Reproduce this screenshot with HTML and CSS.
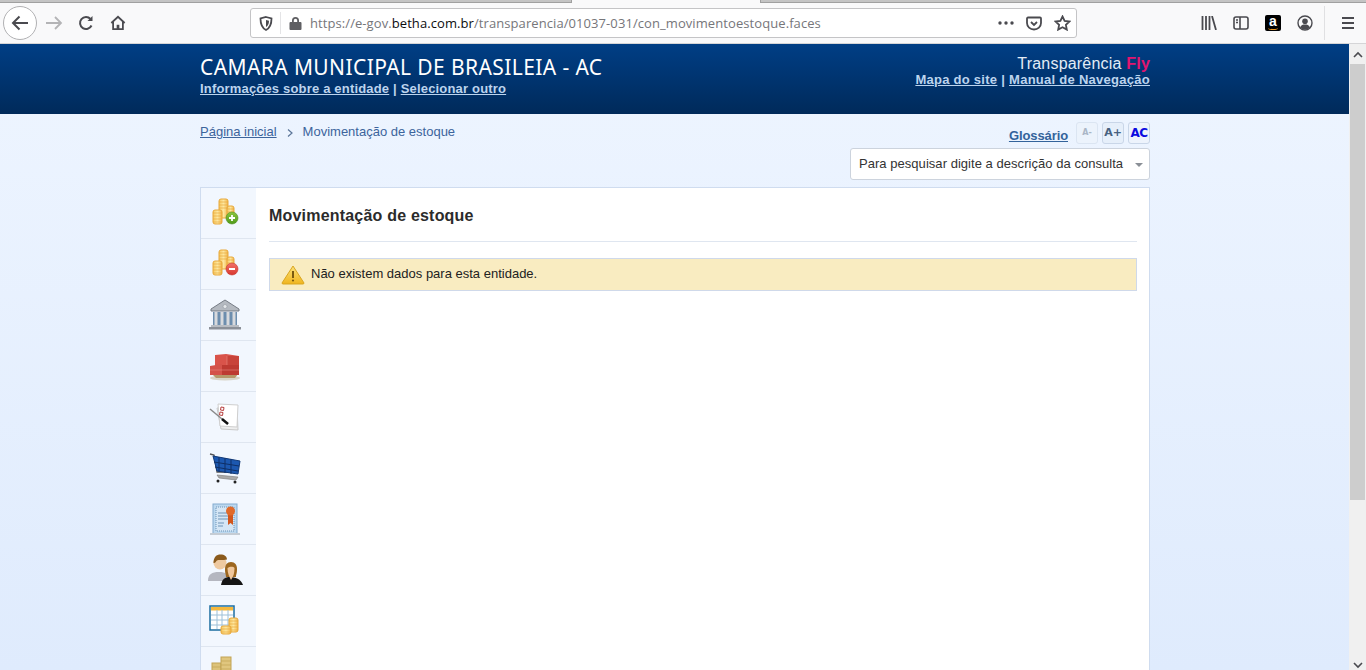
FILE: index.html
```html
<!DOCTYPE html>
<html lang="pt-BR">

<head>
    <meta charset="UTF-8">
    <title>Movimentação de estoque</title>
    <link rel="stylesheet" href="styles.css">
</head>

<body>
    <div class="tabstrip">
        <div class="tab-active"></div>
    </div>

    <!-- browser toolbar -->
    <div class="toolbar">
        <div class="nav-btns">
            <span class="back-btn">
                <svg width="20" height="20" viewBox="0 0 20 20" fill="none" stroke="#4a4a4f" stroke-width="2"><path d="M18 10H3M9.500 3.500L3 10l6.500 6.500"/></svg>
            </span>
            <svg class="fwd" width="18" height="18" viewBox="0 0 18 18" fill="none" stroke="#b4b4b6" stroke-width="1.800"><path d="M1 9h15M10 3l6 6-6 6"/></svg>
            <svg class="reload" width="16" height="16" viewBox="0 0 16 16" fill="none" stroke="#4a4a4f" stroke-width="2"><path d="M13.500 10.500A6 6 0 1 1 12.500 4"/><path d="M14.500 1v5h-5" fill="#4a4a4f" stroke="none"/></svg>
            <svg class="home" width="16" height="16" viewBox="0 0 18 18" fill="none" stroke="#4a4a4f" stroke-width="2"><path d="M1.500 9L9 2l7.500 7M3.500 8v8h11V8"/><rect x="7.500" y="11" width="3" height="5" fill="#4a4a4f" stroke="none"/></svg>
        </div>
        <div class="urlbar">
            <svg class="shield" width="14" height="15" viewBox="0 0 14 15" fill="none" stroke="#4a4a4f" stroke-width="1.800"><path d="M7 1l5.500 1.500c0 6-1.500 9.500-5.500 11.500C3 12 1.500 8.500 1.500 2.500z"/><path d="M7 4l3 .8C10 8 9 9.800 7 11z" fill="#4a4a4f" stroke="none"/></svg>
            <span class="url-sep"></span>
            <svg class="lock" width="13" height="14" viewBox="0 0 13 14"><path d="M3 6V4.500a3.500 3.500 0 0 1 7 0V6h1.500a1 1 0 0 1 1 1v6a1 1 0 0 1-1 1h-10a1 1 0 0 1-1-1V7a1 1 0 0 1 1-1zm1.800 0h3.400V4.500a1.700 1.700 0 0 0-3.400 0z" fill="#5f5f63"/></svg>
            <span class="url-text">https://e-gov.<b>betha.com.br</b>/transparencia/01037-031/con_movimentoestoque.faces</span>
            <span class="url-end">
                <svg width="16" height="4" viewBox="0 0 16 4" fill="#4a4a4f"><circle cx="2" cy="2" r="1.700"/><circle cx="8" cy="2" r="1.700"/><circle cx="14" cy="2" r="1.700"/></svg>
                <svg width="16" height="15" viewBox="0 0 16 15" fill="none" stroke="#4a4a4f" stroke-width="1.800"><path d="M2 1.500h12a1 1 0 0 1 1 1V7a7 6.500 0 0 1-14 0V2.500a1 1 0 0 1 1-1z"/><path d="M5 6l3 3 3-3"/></svg>
                <svg width="17" height="16" viewBox="0 0 17 16" fill="none" stroke="#4a4a4f" stroke-width="1.800"><path d="M8.500 1.500l2.100 4.400 4.900.6-3.600 3.300.9 4.800-4.300-2.400-4.300 2.400.9-4.800L1.500 6.500l4.900-.6z"/></svg>
            </span>
        </div>
        <div class="tools">
            <svg width="16" height="14" viewBox="0 0 16 14" fill="none" stroke="#4a4a4f" stroke-width="1.800"><path d="M1.500 0v14M5 0v14M8.500 0v14M11 0l4 14"/></svg>
            <svg width="16" height="14" viewBox="0 0 16 14" fill="none" stroke="#4a4a4f" stroke-width="1.600"><rect x="1" y="1" width="14" height="12" rx="2"/><path d="M7 1v12M3 4h2M3 6.500h2"/></svg>
            <span class="amazon">a</span>
            <svg width="16" height="16" viewBox="0 0 16 16"><circle cx="8" cy="8" r="7" fill="none" stroke="#4a4a4f" stroke-width="1.400"/><circle cx="8" cy="6.300" r="2.800" fill="#4a4a4f"/><path d="M3 12.500c1-2.500 3-3 5-3s4 .5 5 3a7 7 0 0 1-10 0z" fill="#4a4a4f"/></svg>
            <span class="tool-sep"></span>
            <svg width="14" height="12" viewBox="0 0 14 12" fill="none" stroke="#4a4a4f" stroke-width="2"><path d="M1 1h12M1 6h12M1 11h12"/></svg>
        </div>
    </div>

    <div class="viewport">
        <div class="page">
            <header class="topo">
                <div class="wrap topo-in">
                    <div>
                        <div class="entidade">CAMARA MUNICIPAL DE BRASILEIA - AC</div>
                        <div class="entidade-links"><a href="#">Informações sobre a entidade</a> | <a href="#">Selecionar outro</a></div>
                    </div>
                    <div class="topo-dir">
                        <div class="marca">Transparência <span>Fly</span></div>
                        <div class="topo-links"><a href="#">Mapa do site</a> | <a href="#">Manual de Navegação</a></div>
                    </div>
                </div>
            </header>

            <div class="wrap">
                <div class="barra">
                    <div class="trilha">
                        <a href="#">Página inicial</a>
                        <svg width="6" height="8" viewBox="0 0 6 8" fill="none" stroke="#5b7599" stroke-width="1.200"><path d="M1 .5L5 4 1 7.500"/></svg>
                        <span>Movimentação de estoque</span>
                    </div>
                    <div class="ferramentas">
                        <div class="fonte-btns">
                            <a class="glossario" href="#">Glossário</a>
                            <span class="fbtn off">A-</span>
                            <span class="fbtn mais">A+</span>
                            <span class="fbtn ac">AC</span>
                        </div>
                        <div class="busca">
                            <span>Para pesquisar digite a descrição da consulta</span>
                            <i class="seta"></i>
                        </div>
                    </div>
                </div>

                <div class="painel">
                    <nav class="menu">
                        <div class="menu-item">
                            <svg width="32" height="32" viewBox="0 0 32 32"><use href="#coins"/><circle cx="23" cy="21" r="6" fill="url(#verde)" stroke="#4f8f1c" stroke-width=".6"/><path d="M23 18v6M20 21h6" stroke="#fff" stroke-width="1.800"/></svg>
                        </div>
                        <div class="menu-item">
                            <svg width="32" height="32" viewBox="0 0 32 32"><use href="#coins"/><circle cx="23" cy="21" r="6" fill="url(#vermelho)" stroke="#c4352e" stroke-width=".6"/><path d="M20 21h6" stroke="#fff" stroke-width="2"/></svg>
                        </div>
                        <div class="menu-item">
                            <svg width="32" height="32" viewBox="0 0 32 32">
                                <path d="M16 1L2 10v2h28v-2z" fill="#b4b9c0" stroke="#767c85"/>
                                <circle cx="16" cy="7.500" r="2" fill="#e4e7ea" stroke="#8b9098" stroke-width=".5"/>
                                <rect x="4" y="13" width="24" height="13" fill="#6d8eae"/>
                                <path d="M7 13v13M13 13v13M19 13v13M25 13v13" stroke="#d8dadd" stroke-width="3"/>
                                <rect x="2" y="26" width="28" height="2" fill="#b9bdc3"/>
                                <rect x="0" y="28" width="32" height="2.500" fill="#8b9098"/>
                            </svg>
                        </div>
                        <div class="menu-item">
                            <svg width="32" height="30" viewBox="0 0 32 30">
                                <ellipse cx="16" cy="27" rx="15" ry="2.500" fill="#d8d4c8"/>
                                <path d="M3 23h26l-3 4H7z" fill="#b6986a"/>
                                <path d="M6 4l11-1 13 2v10H6z" fill="#d9534a"/>
                                <path d="M18 5l12 0v10H18z" fill="#c8433a"/>
                                <path d="M1 15l12-2v11H1z" fill="#d4524a"/>
                                <rect x="13" y="14" width="17" height="10" fill="#bd3a32"/>
                                <path d="M18 5v9M13 19h17M1 19h12" stroke="#e6867c" stroke-width=".6"/>
                            </svg>
                        </div>
                        <div class="menu-item">
                            <svg width="32" height="30" viewBox="0 0 32 30">
                                <path d="M8 6l20 0 1 22-17-1z" fill="#eee" stroke="#c9c9c9"/>
                                <path d="M9 2l20 1-1 22-17-1z" fill="#fff" stroke="#cfcfcf"/>
                                <path d="M12 5l3 .5-.5 3-3-.5zM11 10l3 .5-.5 3-3-.5z" fill="#fff" stroke="#b84040"/>
                                <path d="M1 7l18 15" stroke="#8a8a8a" stroke-width="1.500"/>
                                <path d="M13 17l6 5" stroke="#111" stroke-width="2.500"/>
                            </svg>
                        </div>
                        <div class="menu-item">
                            <svg width="32" height="32" viewBox="0 0 32 32">
                                <path d="M1 2l4 1 3 17h18" fill="none" stroke="#555" stroke-width="1.300"/>
                                <path d="M4 4l27 5-2 13-21-3z" fill="#1c58b0" stroke="#123a78"/>
                                <path d="M10 5v15M16 6v15M22 7v15M5 10l25 4M6 15l23 4" stroke="#0e2f66"/>
                                <path d="M8 23l21 2-2 3-17-2z" fill="#aaa" stroke="#777" stroke-width=".6"/>
                                <circle cx="9" cy="29" r="1.500" fill="#222"/>
                                <circle cx="26" cy="30" r="1.500" fill="#222"/>
                            </svg>
                        </div>
                        <div class="menu-item">
                            <svg width="30" height="32" viewBox="0 0 30 32">
                                <rect x="3" y="1" width="24" height="30" fill="#bcd8ef" stroke="#83acd0"/>
                                <rect x="6" y="4" width="18" height="24" fill="#d5e6f5" stroke="#6f95b8" stroke-dasharray="1 1"/>
                                <path d="M8 10h10M8 13h10M8 16h10M8 20h6M8 23h5" stroke="#6f95b8"/>
                                <path d="M18 12v10l2.500-2 2.500 2V12z" fill="#d2561c"/>
                                <circle cx="20.500" cy="8" r="4.500" fill="#e06a2a"/>
                                <rect x="0" y="30" width="30" height="2" fill="#c5ccd4"/>
                            </svg>
                        </div>
                        <div class="menu-item">
                            <svg width="35" height="34" viewBox="0 0 35 34">
                                <path d="M0 28c0-7 4-9 11-9s10 2 10 9z" fill="#b5b7c0"/>
                                <circle cx="12" cy="10" r="6.500" fill="#eec9a0"/>
                                <path d="M5.500 10c0-6 3-8.500 7-8.500s6.500 2 6.500 5c-4 1-9 0-10 1-1 .5-1.500 3-3.500 2.500z" fill="#8a5a1c"/>
                                <path d="M13 32c1-6 4-8 9-8s11 2 13 8z" fill="#151515"/>
                                <path d="M18 24c0-3-1-3-1-8 0-4 2-7 6-7s6 3 6 7c0 5-1 5-1 8z" fill="#9c661f"/>
                                <path d="M19.500 15c2-1 5-2 7 0 0 5-1 8-3.500 12-2-4-3.500-7-3.500-12z" fill="#f0c79c"/>
                            </svg>
                        </div>
                        <div class="menu-item">
                            <svg width="32" height="32" viewBox="0 0 32 32">
                                <rect x="1" y="1" width="24" height="24" fill="#fff" stroke="#1b6da0" stroke-width="1.500"/>
                                <rect x="2" y="2" width="22" height="3.500" fill="#f5b83d"/>
                                <path d="M2 10h22M2 15h22M2 20h22M8 5v19M13 5v19M19 5v19" stroke="#9dc0d8"/>
                                <use href="#stack" x="20" y="13"/>
                                <use href="#stack-low" x="12" y="21"/>
                            </svg>
                        </div>
                        <div class="menu-item">
                            <svg width="32" height="32" viewBox="0 0 32 32"><use href="#coins-dull"/></svg>
                        </div>
                    </nav>

                    <main class="conteudo">
                        <h1>Movimentação de estoque</h1>
                        <div class="aviso">
                            <svg width="24" height="20" viewBox="0 0 24 20">
                                <path d="M12 1L1 18c0 .8.5 1 1 1h20c.5 0 1-.2 1-1z" fill="url(#amarelo)" stroke="#d9a520"/>
                                <path d="M12 6v7" stroke="#7a5a10" stroke-width="2"/>
                                <circle cx="12" cy="15.500" r="1.100" fill="#7a5a10"/>
                            </svg>
                            <span>Não existem dados para esta entidade.</span>
                        </div>
                    </main>
                </div>
            </div>
        </div>

        <div class="scrollbar">
            <svg width="12" height="8" viewBox="0 0 12 8" fill="none" stroke="#4a4a4f" stroke-width="1.600"><path d="M2 6l4-4 4 4"/></svg>
            <div class="thumb"></div>
            <svg class="seta-baixo" width="12" height="8" viewBox="0 0 12 8" fill="none" stroke="#4a4a4f" stroke-width="1.600"><path d="M2 2l4 4 4-4"/></svg>
        </div>
    </div>

    <!-- shared icon parts -->
    <svg class="defs" width="0" height="0">
        <defs>
            <linearGradient id="ouro" x1="0" y1="0" x2="1" y2="0">
                <stop offset="0" stop-color="#f7c860"/>
                <stop offset=".5" stop-color="#fde7a0"/>
                <stop offset="1" stop-color="#f3b64a"/>
            </linearGradient>
            <linearGradient id="verde" x1="0" y1="0" x2="0" y2="1">
                <stop offset="0" stop-color="#8cc63f"/>
                <stop offset="1" stop-color="#4f9a1a"/>
            </linearGradient>
            <linearGradient id="vermelho" x1="0" y1="0" x2="0" y2="1">
                <stop offset="0" stop-color="#f2726a"/>
                <stop offset="1" stop-color="#d8372f"/>
            </linearGradient>
            <linearGradient id="amarelo" x1="0" y1="0" x2="0" y2="1">
                <stop offset="0" stop-color="#fbe27a"/>
                <stop offset="1" stop-color="#f0b51e"/>
            </linearGradient>
            <g id="stack">
                <rect x="0" y="0" width="9" height="14" rx="2" fill="url(#ouro)" stroke="#e8a93c"/>
                <path d="M0 3h9M0 6h9M0 9h9M0 12h9" stroke="#e8a93c" stroke-width=".7"/>
            </g>
            <g id="stack-low">
                <rect x="0" y="0" width="10" height="8" rx="2" fill="url(#ouro)" stroke="#e8a93c"/>
                <path d="M0 3h10M0 6h10" stroke="#e8a93c" stroke-width=".7"/>
            </g>
            <g id="coins">
                <rect x="10" y="2" width="9" height="19" rx="2" fill="url(#ouro)" stroke="#e8a93c"/>
                <rect x="18" y="9" width="7" height="12" rx="2" fill="url(#ouro)" stroke="#e8a93c"/>
                <path d="M10 5h9M10 8h9M10 11h9M18 12h7M18 15h7" stroke="#e8a93c" stroke-width=".7"/>
                <rect x="4" y="13" width="9" height="14" rx="2" fill="url(#ouro)" stroke="#e8a93c"/>
                <path d="M4 16h9M4 19h9M4 22h9M4 25h9" stroke="#e8a93c" stroke-width=".7"/>
            </g>
            <g id="coins-dull">
                <rect x="3" y="7" width="9" height="24" fill="#dcc27a" stroke="#c2a455"/>
                <rect x="12" y="1" width="10" height="30" fill="#e0c67e" stroke="#c2a455"/>
                <path d="M3 11h9M3 15h9M3 19h9M12 5h10M12 9h10M12 13h10" stroke="#c2a455" stroke-width=".7"/>
            </g>
        </defs>
    </svg>
</body>

</html>
```

FILE: styles.css
```css
* {
    margin: 0;
    padding: 0;
    box-sizing: border-box;
}

html, body {
    height: 670px;
    overflow: hidden;
}

body {
    font-family: 'Liberation Sans', Arial, sans-serif;
    background: #fff;
}

.defs {
    position: absolute;
}

/* browser chrome */
.tabstrip {
    height: 3px;
    background: #c4c4c4;
    border-bottom: 1px solid #a0a0a0;
    padding-left: 571px;
}

.tab-active {
    width: 190px;
    height: 3px;
    background: #f9f9fa;
    border-left: 1px solid #a0a0a0;
    border-right: 1px solid #a0a0a0;
}

.toolbar {
    height: 41px;
    background: #f9f9fa;
    border-bottom: 1px solid #d5d5d7;
    display: flex;
    align-items: center;
}

.nav-btns {
    width: 250px;
    display: flex;
    align-items: center;
    padding-left: 3px;
}

.back-btn {
    width: 34px;
    height: 34px;
    border: 1px solid #b1b1b3;
    border-radius: 50%;
    background: #fff;
    display: flex;
    align-items: center;
    justify-content: center;
}

.fwd {
    margin-left: 8px;
}

.reload {
    margin-left: 15px;
}

.home {
    margin-left: 16px;
}

.urlbar {
    width: 827px;
    height: 30px;
    background: #fff;
    border: 1px solid #c4c4c6;
    border-radius: 3px;
    display: flex;
    align-items: center;
    padding-left: 8px;
}

.url-sep {
    width: 1px;
    height: 22px;
    background: #e4e4e6;
    margin: 0 8px 0 7px;
}

.url-text {
    margin-left: 8px;
    font-family: 'Open Sans', sans-serif;
    font-size: 13px;
    letter-spacing: .08px;
    color: #76767a;
    white-space: nowrap;
}

.url-text b {
    font-weight: 400;
    color: #0c0c0d;
}

.url-end {
    margin-left: auto;
    display: flex;
    align-items: center;
    gap: 12px;
    padding-right: 5px;
}

.tools {
    flex: 1;
    display: flex;
    align-items: center;
    justify-content: flex-end;
    gap: 16px;
    padding-right: 11px;
}

.amazon {
    position: relative;
    width: 16px;
    height: 16px;
    background: #000;
    border-radius: 2px;
    color: #fff;
    font-size: 14px;
    font-weight: bold;
    text-align: center;
    line-height: 13px;
}

.amazon::after {
    content: "";
    position: absolute;
    left: 3px;
    bottom: 1px;
    width: 10px;
    height: 3px;
    border-bottom: 1px solid #f19a20;
    border-radius: 50%;
}

.tool-sep {
    width: 1px;
    height: 34px;
    background: #e0e0e2;
    margin-left: -5px;
}

/* page area */
.viewport {
    height: 626px;
    display: flex;
}

.page {
    flex: 1;
    height: 626px;
    overflow: hidden;
    background: linear-gradient(#eef5ff, #dfebfd);
}

.scrollbar {
    width: 17px;
    background: #f0f0f0;
    padding-top: 3px;
    display: flex;
    flex-direction: column;
    align-items: center;
}

.scrollbar svg {
    flex: none;
    margin: 4px 0 5px;
}

.thumb {
    width: 15px;
    height: 436px;
    background: #cdcdcd;
}

.scrollbar .seta-baixo {
    margin: auto 0 1px;
}

.wrap {
    width: 950px;
    margin-left: 200px;
}

.topo {
    height: 70px;
    background: linear-gradient(#003e85, #002a5a);
}

.topo-in {
    display: flex;
    justify-content: space-between;
    padding-top: 10px;
}

.entidade {
    font-family: 'Noto Sans', sans-serif;
    font-size: 21px;
    line-height: 27px;
    color: #fff;
    letter-spacing: .4px;
    white-space: nowrap;
}

.entidade-links,
.topo-links {
    font-size: 13px;
    font-weight: bold;
    color: #bcd4ee;
    line-height: 15px;
}

.entidade-links {
    letter-spacing: .18px;
}

.entidade-links a,
.topo-links a {
    color: #bcd4ee;
}

.topo-dir {
    text-align: right;
}

.marca {
    font-size: 16px;
    line-height: 19px;
    letter-spacing: .2px;
    color: #e3ecf6;
}

.marca span {
    color: #e2146f;
    font-weight: bold;
}

.topo-links {
    line-height: 14px;
    letter-spacing: .27px;
}

.barra {
    height: 73px;
    display: flex;
    justify-content: space-between;
    padding-top: 8px;
}

.trilha {
    font-size: 13px;
    line-height: 16px;
    color: #3c649c;
    display: flex;
    align-items: flex-start;
    gap: 10px;
    padding-top: 2px;
}

.trilha a {
    color: #3c649c;
}

.trilha svg {
    margin-top: 5px;
}

.ferramentas {
    display: flex;
    flex-direction: column;
    align-items: flex-end;
    gap: 4px;
}

.fonte-btns {
    display: flex;
    align-items: center;
    gap: 4px;
}

.glossario {
    font-size: 13px;
    font-weight: bold;
    letter-spacing: -.1px;
    color: #33639b;
    margin-right: 4px;
    padding-top: 5px;
}

.fbtn {
    width: 22px;
    height: 22px;
    border: 1px solid #c9d6e8;
    border-radius: 3px;
    font-family: 'DejaVu Sans', sans-serif;
    font-size: 11px;
    font-weight: bold;
    line-height: 20px;
    text-align: center;
    color: #47617f;
    background: #e6effa;
}

.fbtn.off {
    font-size: 8px;
    color: #aab6c6;
    background: #ecf3fc;
    border-color: #dbe5f2;
}

.fbtn.ac {
    font-size: 12px;
    color: #0a0ae0;
    background: #edf3fc;
    letter-spacing: -.5px;
}

.busca {
    width: 300px;
    height: 32px;
    background: #fff;
    border: 1px solid #ccd3dd;
    border-radius: 3px;
    display: flex;
    align-items: center;
    justify-content: space-between;
    padding: 0 6px 2px 8px;
    font-size: 13px;
    letter-spacing: .04px;
    color: #333;
}

.seta {
    border-top: 4px solid #8a8f96;
    border-left: 4px solid transparent;
    border-right: 4px solid transparent;
    margin-top: 4px;
}

.painel {
    width: 950px;
    height: 520px;
    background: #fff;
    border: 1px solid #cfdcef;
    display: flex;
}

.menu {
    width: 55px;
    background: #f2f7fe;
    flex: none;
}

.menu-item {
    height: 51px;
    border-bottom: 1px solid #dfe6f0;
    display: flex;
    align-items: center;
    justify-content: center;
    padding-right: 7px;
}

.conteudo {
    flex: 1;
    padding: 0 12px 0 13px;
}

.conteudo h1 {
    height: 54px;
    font-size: 16px;
    letter-spacing: .2px;
    line-height: 55px;
    color: #2b2b2b;
    border-bottom: 1px solid #dfe6f0;
    margin-bottom: 16px;
}

.aviso {
    height: 33px;
    background: #f9ecc1;
    border: 1px solid #cfd9ea;
    display: flex;
    align-items: center;
    gap: 6px;
    padding-left: 11px;
    font-size: 13px;
    color: #222;
}

.aviso span {
    padding-bottom: 3px;
}
```
